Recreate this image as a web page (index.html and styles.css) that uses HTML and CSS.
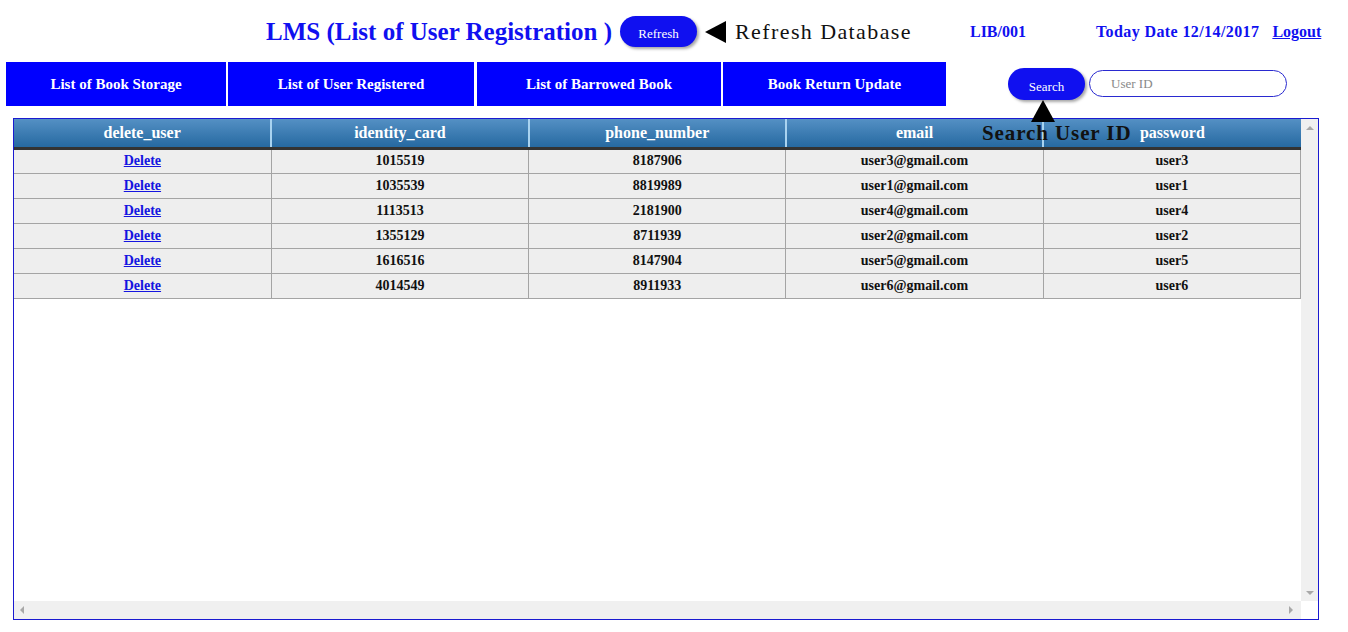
FILE: index.html
```html
<!DOCTYPE html>
<html>
<head>
<meta charset="utf-8">
<title>LMS</title>
<link rel="stylesheet" href="styles.css">
</head>
<body>
<header class="topbar">
  <h1 class="title">LMS (List of User Registration )</h1>
  <button class="pill refresh">Refresh</button>
  <span class="tri-left"></span>
  <span class="hint">Refresh Database</span>
  <span class="libid">LIB/001</span>
  <span class="today">Today Date 12/14/2017</span>
  <a class="logout" href="#">Logout</a>
</header>
<div class="navrow">
  <nav class="nav">
    <a class="nav-btn w1" href="#">List of Book Storage</a>
    <a class="nav-btn w2" href="#">List of User Registered</a>
    <a class="nav-btn w3" href="#">List of Barrowed Book</a>
    <a class="nav-btn w4" href="#">Book Return Update</a>
  </nav>
  <div class="search">
    <button class="pill searchbtn">Search</button>
    <input class="searchbox" type="text" placeholder="User ID">
    <div class="search-hint"><span class="tri-up"></span><span class="hint2">Search User ID</span></div>
  </div>
</div>
<div class="tablebox">
  <div class="viewport">
    <table class="grid">
      <thead>
        <tr><th>delete_user</th><th>identity_card</th><th>phone_number</th><th>email</th><th>password</th></tr>
      </thead>
      <tbody>
        <tr><td><a href="#">Delete</a></td><td>1015519</td><td>8187906</td><td>user3@gmail.com</td><td>user3</td></tr>
        <tr><td><a href="#">Delete</a></td><td>1035539</td><td>8819989</td><td>user1@gmail.com</td><td>user1</td></tr>
        <tr><td><a href="#">Delete</a></td><td>1113513</td><td>2181900</td><td>user4@gmail.com</td><td>user4</td></tr>
        <tr><td><a href="#">Delete</a></td><td>1355129</td><td>8711939</td><td>user2@gmail.com</td><td>user2</td></tr>
        <tr><td><a href="#">Delete</a></td><td>1616516</td><td>8147904</td><td>user5@gmail.com</td><td>user5</td></tr>
        <tr><td><a href="#">Delete</a></td><td>4014549</td><td>8911933</td><td>user6@gmail.com</td><td>user6</td></tr>
      </tbody>
    </table>
  </div>
  <div class="vbar"><span class="arr up"></span><span class="arr down"></span></div>
  <div class="hbar"><span class="arr left"></span><span class="arr right"></span></div>
  <div class="corner"></div>
</div>
</body>
</html>
```
FILE: styles.css
```css
* { box-sizing: border-box; }
body {
  margin: 0;
  width: 1348px;
  height: 632px;
  background: #fff;
  font-family: "Liberation Serif", "DejaVu Serif", serif;
  overflow: hidden;
}
.topbar {
  display: flex;
  align-items: center;
  height: 31px;
  margin-top: 16px;
  padding-left: 266px;
}
.title {
  margin: 0;
  font-size: 25px;
  font-weight: bold;
  color: #1010f0;
  white-space: nowrap;
}
.pill {
  border: none;
  background: #1010f0;
  color: #fff;
  font-family: "Liberation Serif", serif;
  border-radius: 17px;
  box-shadow: 2px 2px 3px rgba(0,0,0,0.35);
  padding: 0;
}
.refresh {
  width: 77px;
  height: 31px;
  margin-left: 8px;
  font-size: 13px;
  padding-top: 4px;
}
.tri-left {
  width: 0; height: 0;
  border-top: 11px solid transparent;
  border-bottom: 11px solid transparent;
  border-right: 21px solid #000;
  margin-left: 8px;
}
.hint {
  margin-left: 9px;
  font-size: 22px;
  letter-spacing: 1.4px;
  color: #111;
  white-space: nowrap;
}
.libid {
  margin-left: 58px;
  color: #1010f0;
  font-weight: bold;
  font-size: 16px;
}
.today {
  margin-left: 70px;
  color: #1010f0;
  font-weight: bold;
  font-size: 16px;
  letter-spacing: 0.4px;
  white-space: nowrap;
}
.logout {
  margin-left: 13px;
  color: #1010f0;
  font-weight: bold;
  font-size: 16px;
}
.navrow {
  display: flex;
  margin-top: 15px;
  height: 44px;
  padding-left: 6px;
}
.nav {
  display: flex;
  gap: 2px;
}
.nav-btn {
  display: flex;
  align-items: center;
  justify-content: center;
  height: 44px;
  background: #0000ff;
  color: #fff;
  font-weight: bold;
  font-size: 15px;
  text-decoration: none;
  padding-top: 1px;
}
.w1 { width: 220px; }
.w2 { width: 246px; margin-right: 1px; }
.w3 { width: 244px; }
.w4 { width: 223px; }
.search {
  position: relative;
  display: flex;
  align-items: flex-start;
  margin-left: 62px;
  padding-top: 6px;
}
.searchbtn {
  width: 77px;
  height: 32px;
  font-size: 13px;
  padding-top: 5px;
}
.searchbox {
  margin-left: 4px;
  margin-top: 2px;
  width: 198px;
  height: 27px;
  border: 1px solid #2a2ad0;
  border-radius: 14px;
  padding: 0 0 0 21px;
  font-family: "Liberation Serif", serif;
  font-size: 13px;
  color: #333;
  outline: none;
}
.searchbox::placeholder { color: #888; }
.search-hint {
  position: absolute;
  left: -26px;
  top: 38px;
  z-index: 2;
  display: flex;
  flex-direction: column;
  align-items: flex-start;
}
.tri-up {
  width: 0; height: 0;
  margin-left: 49px;
  border-left: 12px solid transparent;
  border-right: 12px solid transparent;
  border-bottom: 22px solid #000;
}
.hint2 {
  margin-top: -1px;
  font-size: 21px;
  font-weight: bold;
  letter-spacing: 0.9px;
  color: #111;
  white-space: nowrap;
}
.tablebox {
  margin: 12px 0 0 13px;
  width: 1306px;
  height: 502px;
  border: 1px solid #1a1ad0;
  display: grid;
  grid-template-columns: 1287px 17px;
  grid-template-rows: 482px 18px;
}
.viewport {
  overflow: hidden;
  background: #fff;
}
.grid {
  border-collapse: collapse;
  width: 1287px;
  table-layout: fixed;
}
.grid th {
  height: 29px;
  background: linear-gradient(#5490c4, #2669a1);
  color: #fff;
  font-size: 16px;
  font-weight: bold;
  border-left: 2px solid #a9d3f0;
  border-bottom: 3px solid #333;
  padding: 1px 0 0;
}
.grid th:first-child { border-left: none; }
.grid td {
  height: 25px;
  background: #eeeeee;
  border: 1px solid #a4a4a4;
  border-top: none;
  text-align: center;
  font-size: 14px;
  font-weight: bold;
  color: #111;
  padding: 0;
}
.grid td:first-child { border-left: none; }
.grid td a { color: #1414e0; }
.vbar {
  background: #f0f0f0;
  display: flex;
  flex-direction: column;
  justify-content: space-between;
  align-items: center;
  padding: 7px 0 6px;
}
.hbar {
  background: #f0f0f0;
  display: flex;
  justify-content: space-between;
  align-items: center;
  padding: 0 8px 0 6px;
}
.corner { background: #fff; }
.arr { width: 0; height: 0; }
.up { border-left: 4px solid transparent; border-right: 4px solid transparent; border-bottom: 4px solid #a8a8a8; }
.down { border-left: 4px solid transparent; border-right: 4px solid transparent; border-top: 4px solid #a8a8a8; }
.left { border-top: 4px solid transparent; border-bottom: 4px solid transparent; border-right: 4px solid #a8a8a8; }
.right { border-top: 4px solid transparent; border-bottom: 4px solid transparent; border-left: 4px solid #a8a8a8; }
```
